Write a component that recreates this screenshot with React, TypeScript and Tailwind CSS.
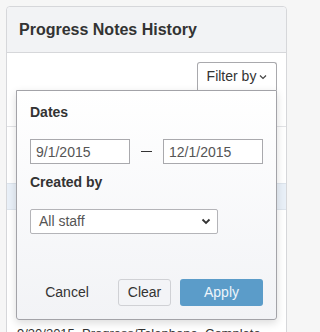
export default function App() {
  return (
    <div
      className="h-[332px] min-h-screen w-full overflow-hidden bg-[#f6f6f6] p-[6px] text-[#333]"
      style={{ fontFamily: '"Liberation Sans", Arial, sans-serif' }}
    >
      <div className="h-[400px] w-[281px] rounded-[4px] border border-[#d6d7da] bg-white">
        {/* Card header */}
        <div className="flex h-[46px] items-center rounded-t-[4px] border-b border-[#d6d7da] bg-[#f2f3f5] pl-[12px]">
          <h1 className="text-[16px] font-bold leading-none text-[#333]">Progress Notes History</h1>
        </div>

        {/* Toolbar */}
        <div className="flex justify-end pr-[9px] pt-[9px]">
          <div className="relative">
            <button className="flex h-[28px] w-[80px] items-center justify-center gap-[3px] rounded-t-[3px] border-x border-t border-[#a9a9ad] bg-white text-[14px] text-[#333]">
              Filter by
              <svg width="8" height="6" viewBox="0 0 8 6" className="mt-[1px]">
                <path d="M1 1.5 L4 4.5 L7 1.5" fill="none" stroke="#444" strokeWidth="1.2" />
              </svg>
            </button>

            {/* Filter popover */}
            <div className="absolute right-0 top-full z-10 w-[261px] rounded-b-[3px] border border-[#a3a3a8] bg-gradient-to-b from-white to-[#f2f3f6] px-[13px] pb-[13px] pt-[13px] shadow-[0_3px_8px_rgba(0,0,0,0.14)]">
              <div className="text-[14px] font-semibold leading-[16px] text-[#333]">Dates</div>
              <div className="mt-[19px] flex items-center">
                <input
                  defaultValue="9/1/2015"
                  className="h-[25px] w-[100px] border border-[#a9a9ad] bg-white pl-[5px] text-[14px] text-[#555] outline-none"
                />
                <span className="mx-[11px] h-px w-[12px] bg-[#333]" />
                <input
                  defaultValue="12/1/2015"
                  className="h-[25px] w-[100px] border border-[#a9a9ad] bg-white pl-[5px] text-[14px] text-[#555] outline-none"
                />
              </div>
              <div className="mt-[10px] text-[14px] font-semibold leading-[16px] text-[#333]">Created by</div>
              <div className="mt-[19px] flex h-[25px] w-[188px] items-center justify-between rounded-[2px] border border-[#b4b4b8] bg-white pl-[8px] pr-[6px] text-[14px] text-[#555]">
                <span>All staff</span>
                <svg width="10" height="7" viewBox="0 0 10 7">
                  <path d="M1.5 1.5 L5 5 L8.5 1.5" fill="none" stroke="#333" strokeWidth="1.8" />
                </svg>
              </div>
              <div className="mt-[45px] flex items-center">
                <button className="h-[27px] w-[74px] text-[14px] text-[#333]">Cancel</button>
                <button className="ml-[14px] h-[27px] w-[53px] rounded-[3px] border border-[#d0d1d5] bg-[#f3f4f7] text-[14px] text-[#333]">
                  Clear
                </button>
                <button className="ml-[9px] h-[27px] w-[83px] rounded-[3px] bg-[#5b9cc9] text-[14px] text-[#eef5fb]">
                  Apply
                </button>
              </div>
            </div>
          </div>
        </div>

        {/* Table rows behind the popover */}
        <div className="mt-[36px] h-[57px] border-t border-[#e2e3e6]" />
        <div className="h-[27px] border-y border-[#dde4ec] bg-[#e9f0f8]" />
        <div className="h-[116px]" />
        <div className="flex text-[13px] leading-[16px] text-[#333]">
          <span className="ml-[10px] w-[65px]">9/30/2015</span>
          <span className="w-[123px]">Progress/Telephone</span>
          <span>Complete</span>
        </div>
      </div>
    </div>
  );
}
